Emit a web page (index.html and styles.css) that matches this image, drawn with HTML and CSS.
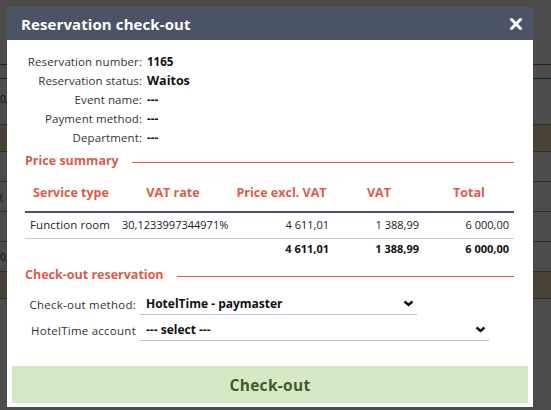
FILE: index.html
```html
<!DOCTYPE html>
<html lang="en">
<head>
  <meta charset="UTF-8">
  <title>Reservation check-out</title>
  <link rel="stylesheet" href="styles.css">
</head>
<body>

<!-- page behind the dialog -->
<div class="page">
  <div class="pg-row pg-red"></div>
  <div class="pg-row pg-blue"><span>0,</span></div>
  <div class="pg-row pg-band"></div>
  <div class="pg-row"></div>
  <div class="pg-row"><span>(</span></div>
  <div class="pg-row"></div>
  <div class="pg-row"><span>0,</span></div>
  <div class="pg-row pg-band"></div>
</div>

<div class="overlay">
  <div class="modal">
    <div class="modal-head">
      <h2>Reservation check-out</h2>
      <span class="close">
        <svg width="12" height="12" viewBox="0 0 12 12"><path d="M1.5 1.5 L10.5 10.5 M10.5 1.5 L1.5 10.5" stroke="#fff" stroke-width="3" stroke-linecap="square"/></svg>
      </span>
    </div>

    <div class="modal-body">
      <dl class="info">
        <dt>Reservation number:</dt><dd>1165</dd>
        <dt>Reservation status:</dt><dd class="big">Waitos</dd>
        <dt>Event name:</dt><dd>---</dd>
        <dt>Payment method:</dt><dd>---</dd>
        <dt>Department:</dt><dd>---</dd>
      </dl>

      <div class="section-title"><span>Price summary</span></div>

      <table class="price-table">
        <thead>
          <tr>
            <th class="c-type">Service type</th>
            <th class="c-rate">VAT rate</th>
            <th class="c-excl">Price excl. VAT</th>
            <th class="c-vat">VAT</th>
            <th class="c-total">Total</th>
          </tr>
        </thead>
        <tbody>
          <tr>
            <td class="name">Function room</td>
            <td>30,1233997344971%</td>
            <td class="num">4 611,01</td>
            <td class="num">1 388,99</td>
            <td class="num">6 000,00</td>
          </tr>
        </tbody>
        <tfoot>
          <tr>
            <td></td>
            <td></td>
            <td class="num">4 611,01</td>
            <td class="num">1 388,99</td>
            <td class="num">6 000,00</td>
          </tr>
        </tfoot>
      </table>

      <div class="section-title"><span>Check-out reservation</span></div>

      <div class="form">
        <label>Check-out method:</label>
        <div class="select select-short">
          <span>HotelTime - paymaster</span>
          <svg width="11" height="7" viewBox="0 0 11 7"><path d="M1.5 1.5 L5.5 5 L9.5 1.5" fill="none" stroke="#111" stroke-width="2.4"/></svg>
        </div>
        <label>HotelTime account</label>
        <div class="select select-long">
          <span>--- select ---</span>
          <svg width="11" height="7" viewBox="0 0 11 7"><path d="M1.5 1.5 L5.5 5 L9.5 1.5" fill="none" stroke="#111" stroke-width="2.4"/></svg>
        </div>
      </div>
    </div>

    <button class="checkout-btn">Check-out</button>
  </div>
</div>

</body>
</html>
```

FILE: styles.css
```css
* {
  box-sizing: border-box;
  margin: 0;
  padding: 0;
}
body {
  font-family: 'Open Sans', 'Liberation Sans', sans-serif;
  background: #fff;
  color: #222;
  width: 551px;
  height: 410px;
  overflow: hidden;
}

/* page under the overlay */
.page {
  padding-top: 64px;
}
.pg-row {
  height: 30px;
  border-bottom: 1px solid #999;
  font-size: 11px;
  line-height: 30px;
  color: #333;
}
.pg-row span {
  display: block;
  width: 7px;
  font-size: 10px;
}
.pg-red {
  height: 15px;
  border-top: 1px solid #c44;
  border-bottom: 1px solid #5a6a9a;
}
.pg-blue {
  height: 46px;
  line-height: 40px;
}
.pg-band {
  height: 27px;
  background: #f0e2b0;
}

.overlay {
  position: fixed;
  inset: 0;
  background: rgba(0, 0, 0, .7);
  padding: 7px;
}

.modal {
  width: 526px;
  height: 400px;
  background: #fff;
  display: flex;
  flex-direction: column;
}
.modal-head {
  height: 33px;
  background: #4a5465;
  display: flex;
  align-items: center;
  justify-content: space-between;
  padding: 0 11px 0 14px;
}
.modal-head h2 {
  color: #fff;
  font-size: 15px;
  font-weight: 700;
  letter-spacing: .1px;
}
.close {
  display: flex;
}

.modal-body {
  padding: 12px 19px 0 18px;
}

.info {
  display: grid;
  grid-template-columns: 117px 1fr;
  column-gap: 5px;
  grid-auto-rows: 19px;
  align-items: center;
}
.info dt {
  text-align: right;
  font-size: 11.5px;
  letter-spacing: .1px;
  color: #333;
  white-space: nowrap;
}
.info dd {
  font-size: 11.5px;
  font-weight: 700;
  color: #111;
}
.info dd.big {
  font-size: 12.5px;
}

.section-title {
  display: flex;
  align-items: center;
  gap: 13px;
  margin-top: 6px;
  line-height: 16px;
  color: #df5a4a;
  font-size: 12.5px;
  font-weight: 700;
}
.section-title::after {
  content: '';
  flex: 1;
  height: 1px;
  margin-top: 2px;
  background: #df5a4a;
}

.price-table {
  width: 489px;
  margin-top: 2px;
  border-collapse: collapse;
  table-layout: fixed;
  font-size: 11px;
}
.price-table th {
  padding: 14px 5px 10px;
  line-height: 16px;
  color: #df5a4a;
  font-size: 12.5px;
  font-weight: 700;
  text-align: center;
  border-bottom: 2px solid #4a5465;
  white-space: nowrap;
}
.c-type { width: 92px; }
.c-rate { width: 112px; }
.c-excl { width: 105px; }
.c-vat { width: 90px; }
.c-total { width: 90px; }
.price-table td {
  padding: 4px 5px 5px;
  line-height: 16px;
  color: #222;
  white-space: nowrap;
}
.price-table td.name {
  font-size: 11.5px;
  letter-spacing: .1px;
}
.price-table tbody td {
  border-bottom: 1px solid #ccc;
}
.price-table tfoot td {
  padding: 2px 5px 4px;
  font-weight: 700;
  color: #111;
}
.price-table .num {
  text-align: right;
}

.form {
  display: grid;
  grid-template-columns: 111px auto;
  column-gap: 4px;
  row-gap: 4px;
  margin-top: 10px;
  align-items: center;
  justify-items: start;
}
.form label {
  justify-self: end;
  font-size: 11.5px;
  letter-spacing: .25px;
  color: #333;
  white-space: nowrap;
}
.select {
  height: 22px;
  display: flex;
  align-items: center;
  justify-content: space-between;
  padding: 0 3px 0 6px;
  border-bottom: 1px solid #b7c3d6;
  font-size: 12px;
  font-weight: 700;
  color: #111;
}
.select-short { width: 277px; }
.select-long { width: 349px; }

.checkout-btn {
  margin: auto 5px 4px;
  height: 37px;
  border: none;
  background: #d5e9c5;
  color: #3d5c29;
  font-family: inherit;
  font-size: 15.5px;
  font-weight: 700;
  letter-spacing: .3px;
}
```
